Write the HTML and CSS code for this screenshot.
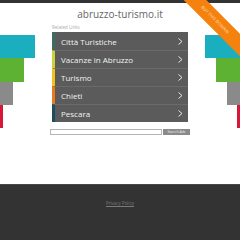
FILE: index.html
```html
<!DOCTYPE html>
<html lang="en">
<head>
    <meta charset="UTF-8">
    <meta name="viewport" content="width=device-width, initial-scale=1.0">
    <title>abruzzo-turismo.it</title>
    <link rel="stylesheet" href="styles.css">
</head>
<body>
    <div class="page">
        <div class="topbar"></div>
        <h1 class="domain">abruzzo-turismo.it</h1>

        <div class="stage">
            <div class="steps steps-left">
                <div class="step cyan"></div>
                <div class="step green"></div>
                <div class="step gray"></div>
                <div class="step red"></div>
            </div>

            <div class="center">
                <div class="related">Related Links</div>
                <ul class="links">
                    <li class="c1"><span>Città Turistiche</span><svg width="5" height="7" viewBox="0 0 5 7"><polyline points="0.5,0.5 4,3.5 0.5,6.5" /></svg></li>
                    <li class="c2"><span>Vacanze in Abruzzo</span><svg width="5" height="7" viewBox="0 0 5 7"><polyline points="0.5,0.5 4,3.5 0.5,6.5" /></svg></li>
                    <li class="c3"><span>Turismo</span><svg width="5" height="7" viewBox="0 0 5 7"><polyline points="0.5,0.5 4,3.5 0.5,6.5" /></svg></li>
                    <li class="c4"><span>Chieti</span><svg width="5" height="7" viewBox="0 0 5 7"><polyline points="0.5,0.5 4,3.5 0.5,6.5" /></svg></li>
                    <li class="c5"><span>Pescara</span><svg width="5" height="7" viewBox="0 0 5 7"><polyline points="0.5,0.5 4,3.5 0.5,6.5" /></svg></li>
                </ul>
                <form class="search">
                    <input type="text" class="searchBox">
                    <button type="button" class="searchBtn">Search Ads</button>
                </form>
            </div>

            <div class="steps steps-right">
                <div class="step cyan"></div>
                <div class="step green"></div>
                <div class="step gray"></div>
                <div class="step red"></div>
            </div>
        </div>

        <footer class="footer"><a href="#">Privacy Policy</a></footer>
    </div>

    <div class="corner">
        <div class="ribbon">BUY THIS DOMAIN</div>
    </div>
</body>
</html>
```

FILE: styles.css
```css
*{
    box-sizing: border-box;
}
html, body{
    margin: 0;
    padding: 0;
    width: 240px;
    height: 240px;
    overflow: hidden;
    background: #fff;
    font-family: "Open Sans", "Liberation Sans", sans-serif;
}
body{
    position: relative;
}
.page{
    display: flex;
    flex-direction: column;
    height: 240px;
}
.topbar{
    height: 3px;
    background: #333;
}
.domain{
    margin: 0;
    padding-top: 4px;
    font-size: 10px;
    line-height: 14px;
    font-weight: normal;
    text-align: center;
    color: #666;
}
.stage{
    flex: 1;
    display: grid;
    grid-template-columns: 50px 140px 50px;
}
.center{
    min-width: 0;
}
.steps{
    display: flex;
    flex-direction: column;
    padding-top: 14px;
}
.steps-left{
    align-items: flex-start;
}
.steps-right{
    align-items: flex-end;
}
.step{
    height: 23px;
}
.cyan{
    width: 35px;
    background: #1aaebf;
}
.green{
    width: 24px;
    height: 24px;
    background: #5db133;
}
.gray{
    width: 13px;
    background: #8a8a8a;
}
.red{
    width: 3px;
    background: #d8163a;
}
.related{
    margin-top: 3px;
    padding-left: 2px;
    font-size: 4.5px;
    line-height: 6px;
    color: #aaa;
}
.links{
    list-style: none;
    margin: 2px 2px 0;
    padding: 0;
    background: #5b5b5b;
}
.links li{
    display: flex;
    align-items: center;
    justify-content: space-between;
    height: 18px;
    padding: 0 5px 0 6px;
    border-left: 3px solid #3d6b5e;
    border-top: 1px solid #6a6a6a;
    color: #f2f2f2;
    font-size: 8px;
}
.links li:first-child{
    border-top: none;
}
.links li.c2{ border-left-color: #c9d23a; }
.links li.c3{ border-left-color: #f0c21e; }
.links li.c4{ border-left-color: #e8791c; }
.links li.c5{ border-left-color: #1d4d5e; }
.links svg polyline{
    fill: none;
    stroke: #e6e6e6;
    stroke-width: 1;
}
.search{
    display: flex;
    margin: 7px 0 0;
    height: 6px;
}
.searchBox{
    flex: 1;
    min-width: 0;
    width: 0;
    height: 6px;
    margin: 0;
    padding: 0;
    border: 1px solid #b5b5b5;
    background: #fff;
}
.searchBtn{
    flex: none;
    width: 27px;
    height: 6px;
    margin: 0 0 0 1px;
    padding: 0;
    border: none;
    background: #8a8a8a;
    color: #eee;
    font-family: "Open Sans", sans-serif;
    font-size: 3.5px;
    line-height: 6px;
}
.footer{
    height: 56px;
    padding-top: 15px;
    background: #333;
    border-top: 1px solid #484848;
    text-align: center;
    font-size: 4.5px;
    line-height: 6px;
}
.footer a{
    color: #7a7a7a;
}
/* ribbon in the top right corner */
.corner{
    position: absolute;
    top: 0;
    right: 0;
    width: 70px;
    height: 70px;
    overflow: hidden;
}
.ribbon{
    position: absolute;
    left: -10px;
    top: 12px;
    width: 110px;
    height: 16px;
    background: #f5820f;
    transform: rotate(45deg);
    color: #fbe9d0;
    font-size: 4px;
    line-height: 16px;
    text-align: center;
    letter-spacing: 0.2px;
}
```
